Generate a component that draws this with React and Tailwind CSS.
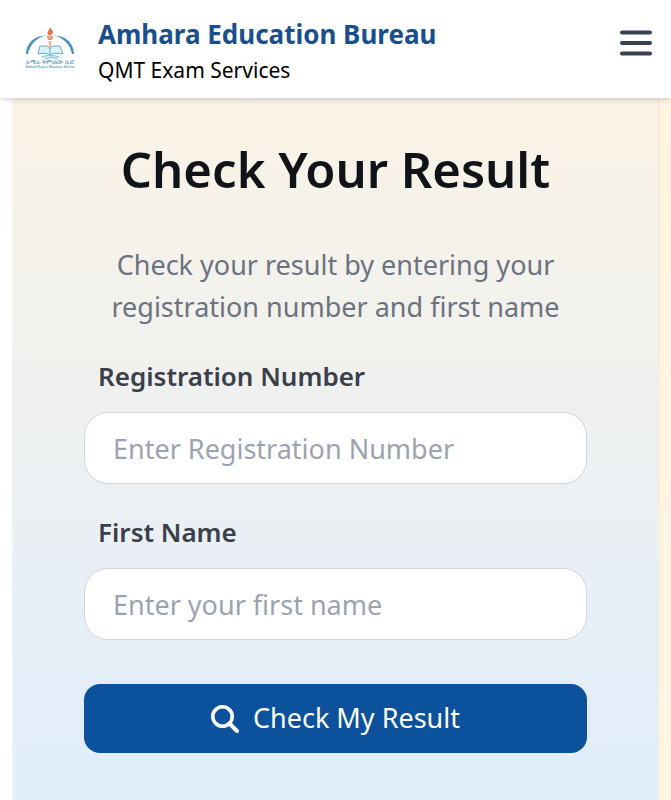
import { useState } from 'react';

const Logo = () => (
  <svg viewBox="0 0 52 44" className="h-11 w-13 shrink-0" role="img" aria-label="Amhara Education Bureau logo">
    <path d="M2 28C2 18 10 9 23 9.500C13 11 6 18 4 28Z" fill="#4b8fc4" />
    <path d="M50 28C50 18 42 9 29 9.500C39 11 46 18 48 28Z" fill="#4b8fc4" />
    <path d="M26 1C28 4 29.500 5 28.500 8C27 10 24 10 23.500 7.500C23 5 26 4 26 1Z" fill="#e5744a" />
    <path d="M22.500 10H29.500L28 14H24Z" fill="#dfa083" />
    <path d="M24.500 15H27.500L27 23H25Z" fill="#f2b8a0" />
    <path d="M16 20H21C24 20 25 21 26 23C27 21 28 20 31 20H36L39 28C33 27 29 27 26 29C23 27 19 27 14 28Z" fill="#dcf1f5" stroke="#68acba" strokeWidth="1" />
    <path d="M26 23V29" stroke="#68acba" strokeWidth="1" />
    <path d="M18 31Q26 28 35 31M21 33Q27 30 34 33" fill="none" stroke="#8ccbdc" strokeWidth="1.500" />
    <text x="26" y="38" textAnchor="middle" fontSize="6" fontWeight="600" fill="#6597b8" fontFamily="Noto Sans, sans-serif">አማራ ትምህርት ቢሮ</text>
    <text x="26" y="42" textAnchor="middle" fontSize="3" fontWeight="600" fill="#57a5c2" fontFamily="Noto Sans, sans-serif">Amhara Region Education Bureau</text>
  </svg>
);

const SearchIcon = () => (
  <svg viewBox="0 0 28 28" className="size-7" fill="none" stroke="currentColor" strokeLinecap="round" aria-hidden="true">
    <circle cx="11.500" cy="11.500" r="9.700" strokeWidth="3.600" />
    <path d="M19 19L26 26" strokeWidth="4" />
  </svg>
);

const Header = () => (
  <header className="relative z-10 flex items-center justify-between bg-white pt-3 pr-[15px] pb-[14px] pl-6 shadow-md">
    <a href="#" className="flex items-center gap-[22px]">
      <Logo />
      <div>
        <p className="text-[26px] leading-11 font-bold text-[#1a4f8f]">Amhara Education Bureau</p>
        <p className="text-[21px] leading-7 text-black">QMT Exam Services</p>
      </div>
    </a>
    <button type="button" aria-label="Open menu" className="mb-[10px] cursor-pointer text-[#374151]">
      <svg viewBox="0 0 40 40" className="size-10" fill="none" stroke="currentColor" strokeWidth="4" strokeLinecap="round">
        <path d="M6 9.500H34M6 20H34M6 30.500H34" />
      </svg>
    </button>
  </header>
);

const Field = ({ id, label, placeholder, value, onChange }) => (
  <div className="flex flex-col gap-3">
    <label htmlFor={id} className="px-[14px] text-[26px] leading-12 font-semibold text-[#3a3f4b]">
      {label}
    </label>
    <input
      id={id}
      type="text"
      value={value}
      onChange={(e) => onChange(e.target.value)}
      placeholder={placeholder}
      className="h-[72px] w-full rounded-3xl border border-gray-300 bg-white px-7 text-[27px] text-gray-800 placeholder:text-[#9ca3af]"
    />
  </div>
);

const App = () => {
  const [regNumber, setRegNumber] = useState('');
  const [firstName, setFirstName] = useState('');

  return (
    <div className="flex min-h-screen flex-col bg-linear-to-r from-white to-[#fff4e0] font-['Noto_Sans',sans-serif]">
      <Header />
      <main className="mx-[13px] flex-1 bg-linear-to-b from-[#faf3e6] to-[#e0edfb] px-[71px] pt-9 pb-12 shadow-sm">
        <h1 className="text-center text-[49px] leading-[70px] font-semibold text-[#111318]">Check Your Result</h1>
        <p className="mt-10 text-center text-[27px] leading-[42px] text-[#6b7280]">
          Check your result by entering your registration number and first name
        </p>
        <form className="mt-6 flex flex-col gap-6" onSubmit={(e) => e.preventDefault()}>
          <Field
            id="regNumber"
            label="Registration Number"
            placeholder="Enter Registration Number"
            value={regNumber}
            onChange={setRegNumber}
          />
          <Field
            id="firstName"
            label="First Name"
            placeholder="Enter your first name"
            value={firstName}
            onChange={setFirstName}
          />
          <button
            type="submit"
            className="mt-5 flex h-[69px] w-full cursor-pointer items-center justify-center gap-[14px] rounded-2xl bg-[#0c519c] text-[27px] text-white"
          >
            <SearchIcon />
            Check My Result
          </button>
        </form>
      </main>
    </div>
  );
};

export default App;
